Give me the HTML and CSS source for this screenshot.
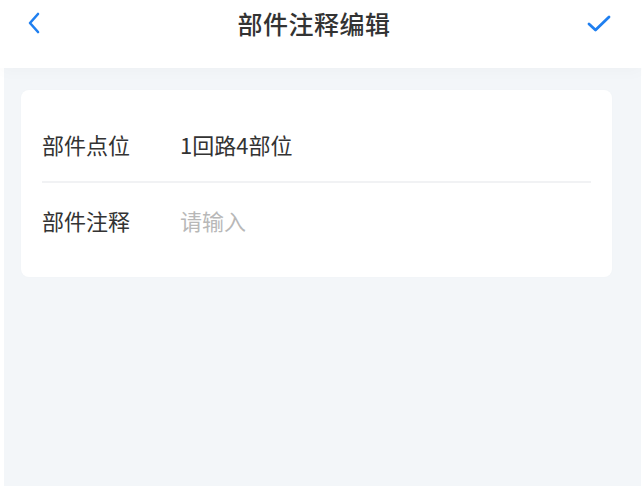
FILE: index.html
```html
<!DOCTYPE html>
<html lang="zh">
<head>
<meta charset="utf-8">
<link rel="stylesheet" href="styles.css">
</head>
<body>
<div class="page">
  <header class="nav">
    <svg class="back" width="16" height="24" viewBox="0 0 16 24"><path d="M12 3 L4 12 L12 21" fill="none" stroke="#1f7ff0" stroke-width="2.6" stroke-linecap="round" stroke-linejoin="round"/></svg>
    <h1 class="title">部件注释编辑</h1>
    <svg class="ok" width="26" height="20" viewBox="0 0 26 20"><path d="M3 10 L9.5 16 L23 3" fill="none" stroke="#1f7ff0" stroke-width="2.8" stroke-linecap="round" stroke-linejoin="round"/></svg>
  </header>
  <main class="content">
    <section class="card">
      <div class="row">
        <span class="label">部件点位</span>
        <span class="value">1回路4部位</span>
      </div>
      <div class="divider"></div>
      <div class="row">
        <span class="label">部件注释</span>
        <span class="value placeholder">请输入</span>
      </div>
    </section>
  </main>
</div>
</body>
</html>
```
FILE: styles.css
```css
html, body {
  margin: 0;
  padding: 0;
  background: #ffffff;
}
body {
  font-family: "Noto Sans CJK SC", "Noto Sans", sans-serif;
  width: 642px;
  height: 486px;
  overflow: hidden;
}
.page {
  display: flex;
  flex-direction: column;
  height: 486px;
}
.nav {
  height: 68px;
  display: flex;
  align-items: center;
  justify-content: space-between;
  padding: 0 30px 0 26px;
  position: relative;
  z-index: 1;
  background: #fff;
  box-shadow: 0 4px 14px rgba(0,0,0,0.025);
}
.back {
  margin-top: -22px;
}
.ok {
  margin-top: -20px;
}
.title {
  margin: -22px 0 0 0;
  font-size: 25px;
  font-weight: 500;
  color: #333;
  letter-spacing: 0.5px;
}
.content {
  flex: 1;
  background: #f3f6f9;
  margin: 0 1px 0 4px;
  padding: 22px 29px 0 17px;
}
.card {
  background: #fff;
  border-radius: 8px;
  padding: 17px 21px 20px 21px;
  box-shadow: 0 0 3px rgba(0,0,0,0.02);
}
.row {
  height: 74px;
  display: flex;
  align-items: center;
  font-size: 22px;
  color: #333;
}
.label {
  width: 138px;
}
.placeholder {
  color: #b8b8b8;
}
.divider {
  height: 2px;
  background: #f1f2f4;
}
```
